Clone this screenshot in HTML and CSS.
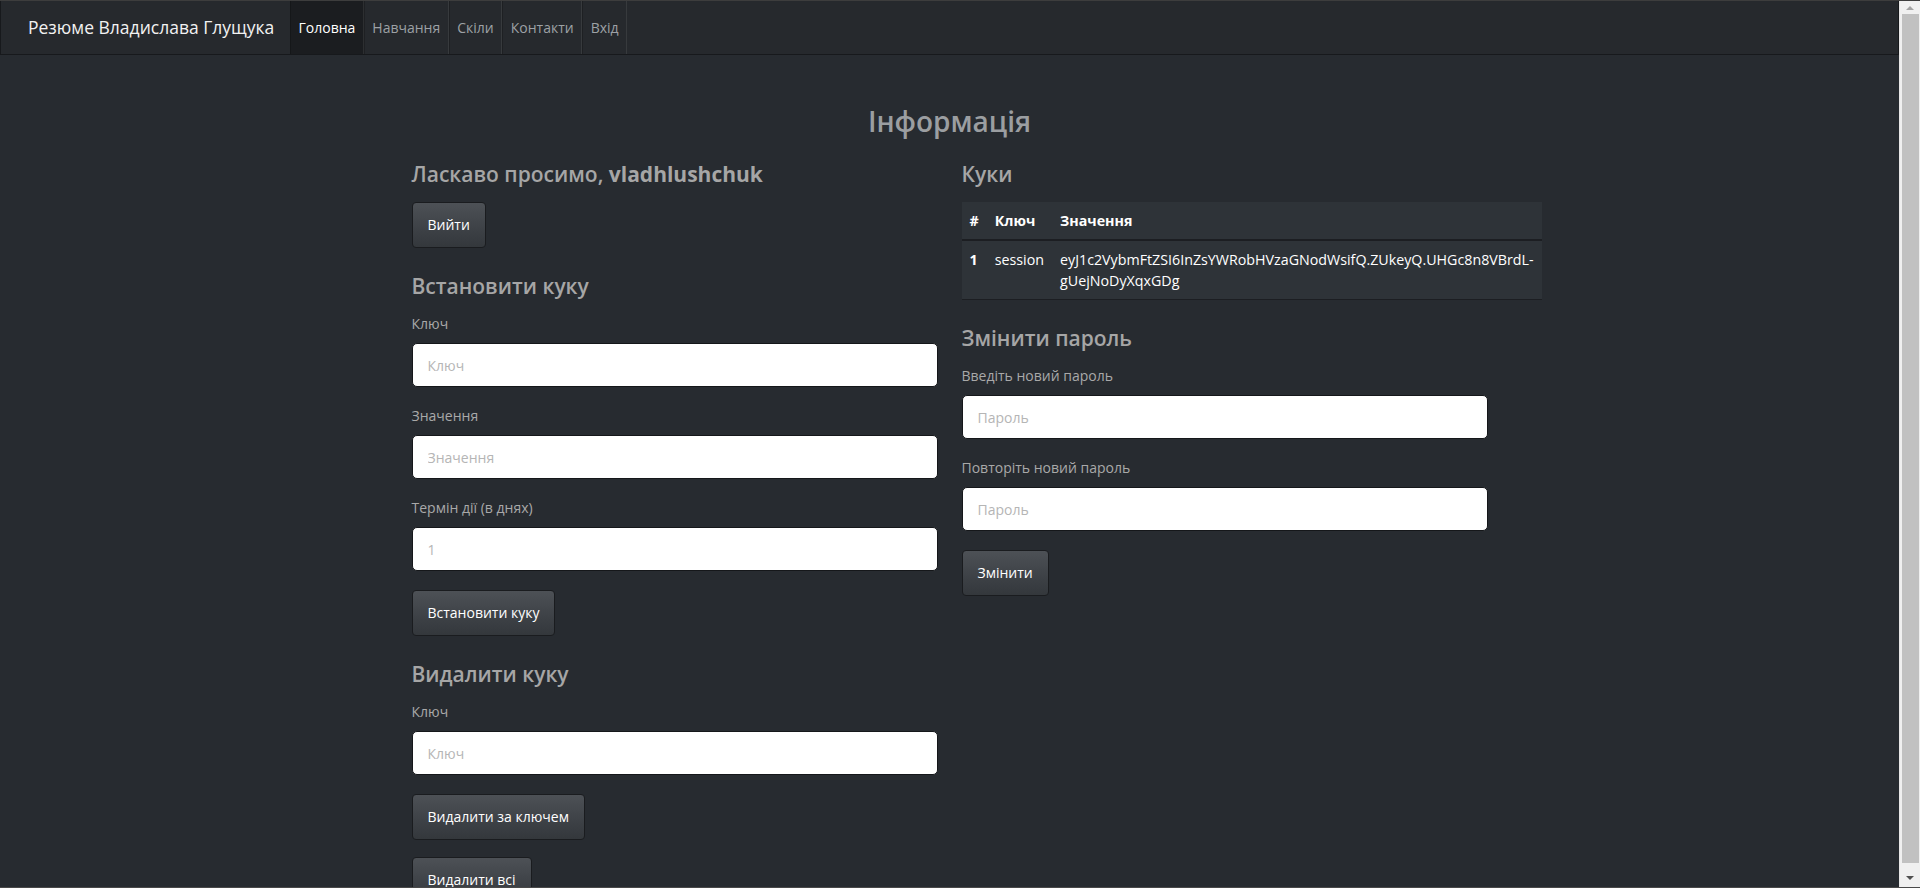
FILE: index.html
```html
<!DOCTYPE html>
<html lang="uk">
<head>
<meta charset="utf-8">
<title>Резюме Владислава Глущука</title>
<link rel="stylesheet" href="styles.css">
</head>
<body>
<div class="window">
  <div class="viewport">
    <nav class="navbar">
      <a class="brand" href="#">Резюме Владислава Глущука</a>
      <ul class="nav">
        <li class="active"><a href="#">Головна</a></li>
        <li><a href="#">Навчання</a></li>
        <li><a href="#">Скіли</a></li>
        <li><a href="#">Контакти</a></li>
        <li><a href="#">Вхід</a></li>
      </ul>
    </nav>
    <main class="container">
      <h2 class="page-title">Інформація</h2>
      <div class="columns">
        <div class="col">
          <section class="block first">
            <h3>Ласкаво просимо, <b>vladhlushchuk</b></h3>
            <button class="btn" type="button">Вийти</button>
          </section>
          <section class="block">
            <h3>Встановити куку</h3>
            <div class="field"><label>Ключ</label><input type="text" placeholder="Ключ"></div>
            <div class="field"><label>Значення</label><input type="text" placeholder="Значення"></div>
            <div class="field"><label>Термін дії (в днях)</label><input type="number" placeholder="1"></div>
            <button class="btn" type="button">Встановити куку</button>
          </section>
          <section class="block">
            <h3>Видалити куку</h3>
            <div class="field"><label>Ключ</label><input type="text" placeholder="Ключ"></div>
            <div class="btn-stack">
              <button class="btn" type="button">Видалити за ключем</button>
              <button class="btn" type="button">Видалити всі</button>
            </div>
          </section>
        </div>
        <div class="col">
          <section class="block first">
            <h3>Куки</h3>
            <table class="cookies">
              <thead>
                <tr><th>#</th><th>Ключ</th><th>Значення</th></tr>
              </thead>
              <tbody>
                <tr><th>1</th><td>session</td><td>eyJ1c2VybmFtZSI6InZsYWRobHVzaGNodWsifQ.ZUkeyQ.UHGc8n8VBrdL-gUejNoDyXqxGDg</td></tr>
              </tbody>
            </table>
          </section>
          <section class="block">
            <h3>Змінити пароль</h3>
            <div class="field"><label>Введіть новий пароль</label><input type="password" placeholder="Пароль"></div>
            <div class="field"><label>Повторіть новий пароль</label><input type="password" placeholder="Пароль"></div>
            <button class="btn" type="button">Змінити</button>
          </section>
        </div>
      </div>
    </main>
  </div>
  <div class="scrollbar">
    <div class="arrow-box"><span class="arrow up"></span></div>
    <div class="thumb"></div>
    <div class="arrow-box bottom"><span class="arrow down"></span></div>
  </div>
</div>
</body>
</html>
```

FILE: styles.css
```css
html, body {
  margin: 0;
  height: 100%;
  overflow: hidden;
}

body {
  background: #272b30;
  font-family: "Open Sans", "Noto Sans", sans-serif;
  font-size: 14px;
  color: #a8a8a8;
}

.window {
  display: flex;
  height: 888px;
  box-sizing: border-box;
  border-top: 1px solid #3d3d3d;
  border-bottom: 1px solid #4a4a4a;
}

.viewport {
  flex: 1;
  min-width: 0;
  overflow: hidden;
}

/* navbar */
.navbar {
  display: flex;
  height: 54px;
  box-sizing: border-box;
  background: #26292d;
  border: 1px solid #17191c;
  border-top: none;
}

.brand {
  width: 262px;
  padding-left: 27px;
  line-height: 53px;
  font-size: 17.5px;
  color: #f2f2f2;
  text-decoration: none;
  white-space: nowrap;
}

.nav {
  display: flex;
  margin: 0;
  padding: 0;
  list-style: none;
}

.nav a {
  display: block;
  padding: 0 7.5px;
  line-height: 53px;
  color: #9da1a5;
  text-decoration: none;
  border-left: 1px solid rgba(0, 0, 0, 0.2);
  border-right: 1px solid rgba(255, 255, 255, 0.08);
}

.nav .active a {
  background: #1b1d20;
  color: #ffffff;
}

/* content */
.container {
  width: 1076px;
  margin: 0 auto;
}

.page-title {
  margin: 50px 0 23px;
  font-size: 28px;
  line-height: 33px;
  font-weight: 600;
  text-align: center;
  color: #9b9ea1;
}

.columns {
  display: grid;
  grid-template-columns: 526px 526px;
  column-gap: 24px;
  align-items: start;
}

.block {
  margin-top: 25px;
}

.block.first {
  margin-top: 0;
}

h3 {
  margin: 0 0 15px;
  font-size: 21px;
  line-height: 26px;
  font-weight: 600;
  color: #a6a6a6;
}

h3 b {
  font-weight: 700;
}

.field {
  margin-bottom: 19px;
}

label {
  display: block;
  margin-bottom: 9px;
  line-height: 20px;
  color: #a9a9a9;
}

input {
  display: block;
  width: 100%;
  height: 44px;
  box-sizing: border-box;
  padding: 0 15px;
  border: 1px solid #15171a;
  border-radius: 5px;
  background: #ffffff;
  font-family: inherit;
  font-size: 14px;
  color: #555;
  outline: none;
}

input::placeholder {
  color: #b5b5b5;
}

input[type=number]::-webkit-inner-spin-button,
input[type=number]::-webkit-outer-spin-button {
  -webkit-appearance: none;
  margin: 0;
}

.btn {
  display: inline-block;
  padding: 12px 15px;
  line-height: 20px;
  border: 1px solid #1a1c1f;
  border-radius: 4px;
  background: linear-gradient(#4d5156, #3d4146 60%, #34383c);
  color: #ffffff;
  font-family: inherit;
  font-size: 14px;
  cursor: pointer;
}

.btn-stack {
  display: flex;
  flex-direction: column;
  align-items: flex-start;
  gap: 17px;
}

/* table */
.cookies {
  width: 100%;
  border-collapse: collapse;
  background: #2e3338;
  color: #ffffff;
  font-size: 14.25px;
}

.cookies th,
.cookies td {
  padding: 8px;
  line-height: 21px;
  text-align: left;
  vertical-align: top;
}

.cookies thead th {
  border-bottom: 2px solid #1c1e22;
  font-weight: 700;
}

.cookies tbody th,
.cookies tbody td {
  border-bottom: 1px solid #1c1e22;
}

.cookies tbody th {
  font-weight: 700;
}

/* fake window scrollbar */
.scrollbar {
  width: 21px;
  flex: none;
  display: flex;
  flex-direction: column;
  align-items: center;
  background: #f0f0f0;
  border-left: 1px solid #e6e6e6;
  box-sizing: border-box;
}

.arrow-box {
  height: 13px;
  width: 100%;
  display: flex;
  align-items: center;
  justify-content: center;
}

.arrow-box.bottom {
  flex: 1;
  align-items: flex-end;
  padding-bottom: 7px;
  box-sizing: border-box;
}

.arrow {
  width: 0;
  height: 0;
  border-left: 4px solid transparent;
  border-right: 4px solid transparent;
}

.arrow.up {
  border-bottom: 4px solid #a3a3a3;
}

.arrow.down {
  border-top: 4px solid #505050;
}

.thumb {
  width: 17px;
  height: 849px;
  background: #c1c1c1;
}
```
